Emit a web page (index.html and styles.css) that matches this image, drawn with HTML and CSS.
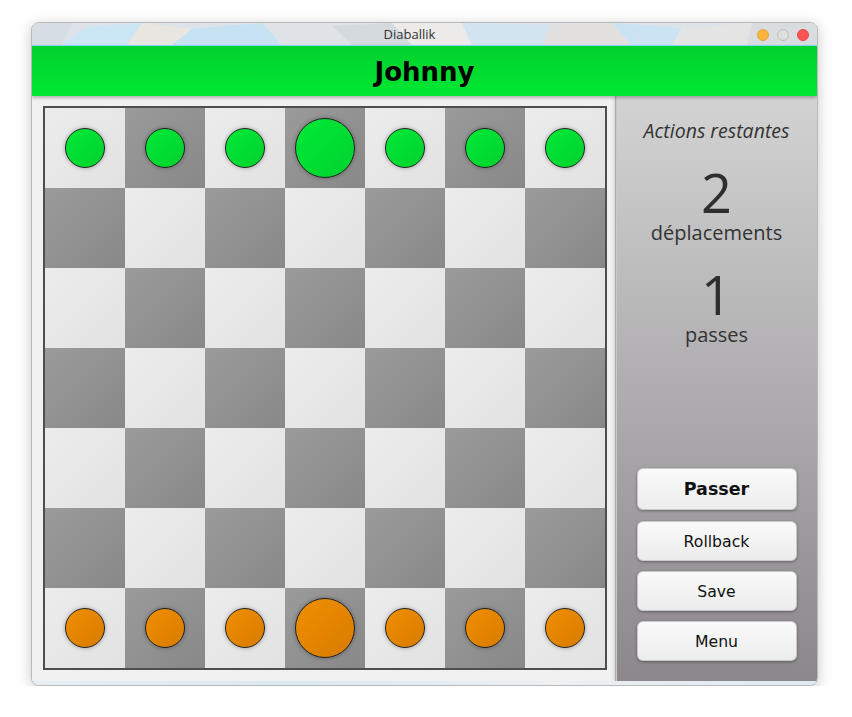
FILE: index.html
```html
<!DOCTYPE html>
<html lang="fr">
<head>
<meta charset="utf-8">
<title>Diaballik</title>
<link rel="stylesheet" href="styles.css">
</head>
<body>
<div class="window">
  <div class="titlebar">
    <svg class="frost" width="785" height="22" viewBox="0 0 785 22" preserveAspectRatio="none">
      <polygon points="0,0 40,0 30,22 0,22" fill="#d6dde3"/>
      <polygon points="30,22 55,4 110,0 95,22" fill="#cbe6f5"/>
      <polygon points="110,0 160,6 140,22 95,22" fill="#e9e6e1"/>
      <polygon points="160,6 230,0 250,22 140,22" fill="#c6e2f3"/>
      <polygon points="230,0 300,3 320,22 250,22" fill="#dfe3e8"/>
      <polygon points="300,3 360,0 380,22 320,22" fill="#d5dadf"/>
      <polygon points="360,0 430,0 440,22 380,22" fill="#ecebe9"/>
      <polygon points="430,0 520,2 510,22 440,22" fill="#d2e4f0"/>
      <polygon points="520,2 580,0 600,22 510,22" fill="#e2e1e0"/>
      <polygon points="580,0 650,5 640,22 600,22" fill="#cbe4f3"/>
      <polygon points="650,5 720,0 715,22 640,22" fill="#e4e4e4"/>
      <polygon points="720,0 785,0 785,22 715,22" fill="#dadde0"/>
    </svg>
    <span class="title">Diaballik</span>
    <div class="lights">
      <span class="light min"></span>
      <span class="light max"></span>
      <span class="light close"></span>
    </div>
  </div>
  <div class="header">Johnny</div>
  <div class="main">
    <div class="boardwrap">
      <div class="board">
        <div class="cell l"><span class="piece green"></span></div>
        <div class="cell d"><span class="piece green"></span></div>
        <div class="cell l"><span class="piece green"></span></div>
        <div class="cell d"><span class="piece green big"></span></div>
        <div class="cell l"><span class="piece green"></span></div>
        <div class="cell d"><span class="piece green"></span></div>
        <div class="cell l"><span class="piece green"></span></div>

        <div class="cell d"></div><div class="cell l"></div><div class="cell d"></div><div class="cell l"></div><div class="cell d"></div><div class="cell l"></div><div class="cell d"></div>
        <div class="cell l"></div><div class="cell d"></div><div class="cell l"></div><div class="cell d"></div><div class="cell l"></div><div class="cell d"></div><div class="cell l"></div>
        <div class="cell d"></div><div class="cell l"></div><div class="cell d"></div><div class="cell l"></div><div class="cell d"></div><div class="cell l"></div><div class="cell d"></div>
        <div class="cell l"></div><div class="cell d"></div><div class="cell l"></div><div class="cell d"></div><div class="cell l"></div><div class="cell d"></div><div class="cell l"></div>
        <div class="cell d"></div><div class="cell l"></div><div class="cell d"></div><div class="cell l"></div><div class="cell d"></div><div class="cell l"></div><div class="cell d"></div>

        <div class="cell l"><span class="piece orange"></span></div>
        <div class="cell d"><span class="piece orange"></span></div>
        <div class="cell l"><span class="piece orange"></span></div>
        <div class="cell d"><span class="piece orange big"></span></div>
        <div class="cell l"><span class="piece orange"></span></div>
        <div class="cell d"><span class="piece orange"></span></div>
        <div class="cell l"><span class="piece orange"></span></div>
      </div>
    </div>
    <div class="side">
      <div class="actions">Actions restantes</div>
      <div class="count">2</div>
      <div class="label">déplacements</div>
      <div class="count second">1</div>
      <div class="label last">passes</div>
      <div class="buttons">
        <button class="btn strong">Passer</button>
        <button class="btn">Rollback</button>
        <button class="btn">Save</button>
        <button class="btn">Menu</button>
      </div>
    </div>
  </div>
  <div class="footer"></div>
</div>
</body>
</html>
```
FILE: styles.css
```css
* { box-sizing: border-box; }
html, body { margin: 0; background: #ffffff; }
body { padding: 22px 0 0 31px; font-family: "Open Sans", "Noto Sans", sans-serif; }

.window {
  width: 787px;
  height: 664px;
  border: 1px solid #b9b9b9;
  border-radius: 8px;
  overflow: hidden;
  display: flex;
  flex-direction: column;
  background: #f0f0f0;
  box-shadow: 0 3px 14px rgba(0,0,0,0.22);
}

.titlebar {
  position: relative;
  height: 22px;
  flex: none;
  display: flex;
  align-items: center;
  justify-content: center;
  padding-right: 30px;
  background: #dde3e8;
}
.frost { position: absolute; left: 0; top: 0; }
.title {
  position: relative;
  font-family: "Open Sans", "Noto Sans", sans-serif;
  font-size: 13px;
  color: #333;
}
.lights {
  position: absolute;
  right: 8px;
  top: 6px;
  display: flex;
  gap: 8px;
}
.light { width: 12px; height: 12px; border-radius: 50%; display: block; }
.light.min { background: #fdb53f; border: 1px solid #e6a23a; }
.light.max { background: #dedede; border: 1px solid #bdbdbd; }
.light.close { background: #fc5453; border: 1px solid #e04645; }

.header {
  height: 51px;
  flex: none;
  background: linear-gradient(#00d12d, #00e833);
  text-align: center;
  font-family: "DejaVu Sans", Verdana, sans-serif;
  font-weight: bold;
  font-size: 26px;
  line-height: 52px;
  color: #000;
  box-shadow: 0 2px 3px rgba(0,0,0,0.25);
  position: relative;
  z-index: 1;
  border-top: 1px solid #7fd6ff;
}

.main {
  flex: 1;
  display: flex;
  min-height: 0;
}
.boardwrap {
  padding: 10px 8px 0 11px;
  background: #f1f1f1;
}
.board {
  width: 564px;
  height: 564px;
  border: 2px solid #4e4e4e;
  display: grid;
  grid-template-columns: repeat(7, 80px);
  grid-template-rows: repeat(7, 80px);
}
.cell {
  display: flex;
  align-items: center;
  justify-content: center;
}
.cell.l { background: linear-gradient(135deg, #ececec, #e2e2e2); }
.cell.d { background: linear-gradient(135deg, #9b9b9b, #888888); }

.piece {
  width: 40px;
  height: 40px;
  border-radius: 50%;
  border: 1px solid #1f1f1f;
  display: block;
  box-shadow: 0 0 4px rgba(0,0,0,0.35);
}
.piece.big { width: 60px; height: 60px; }
.piece.green { background: linear-gradient(135deg, #00ea36, #00d12e); }
.piece.orange { background: linear-gradient(135deg, #ef8f00, #d87b00); }

.side {
  width: 202px;
  flex: none;
  border-left: 1px solid #a9a9a9;
  box-shadow: inset 1px 0 0 #c9c9c9, -2px 0 2px rgba(0,0,0,0.08);
  background: linear-gradient(#d3d3d3, #8b878b);
  display: flex;
  flex-direction: column;
  align-items: center;
  color: #333;
  padding-top: 23px;
}
.actions {
  font-style: italic;
  font-size: 19.5px;
  line-height: 24px;
}
.count {
  font-size: 54px;
  line-height: 46px;
  margin-top: 26px;
  font-weight: 400;
  color: #2e2e2e;
}
.count.second { margin-top: 26px; }
.label {
  font-size: 20px;
  line-height: 24px;
  margin-top: 6px;
}
.label.last { margin-top: 6px; }
.buttons {
  margin-top: auto;
  margin-bottom: 20px;
  display: flex;
  flex-direction: column;
  gap: 10px;
}
.btn {
  width: 160px;
  height: 40px;
  border: 1px solid #c8c8c8;
  border-radius: 6px;
  background: linear-gradient(#fafafa, #ececec);
  box-shadow: 0 1px 3px rgba(0,0,0,0.35);
  font-family: "DejaVu Sans", Verdana, sans-serif;
  font-size: 15.7px;
  color: #111;
  padding: 0;
}
.btn.strong { height: 42px; font-weight: bold; font-size: 17.5px; margin-bottom: 1px; }

.footer {
  height: 4px;
  flex: none;
  background: linear-gradient(90deg, #e8eef2, #dbe8f0, #eef0f2, #dfe9f0);
}
```
